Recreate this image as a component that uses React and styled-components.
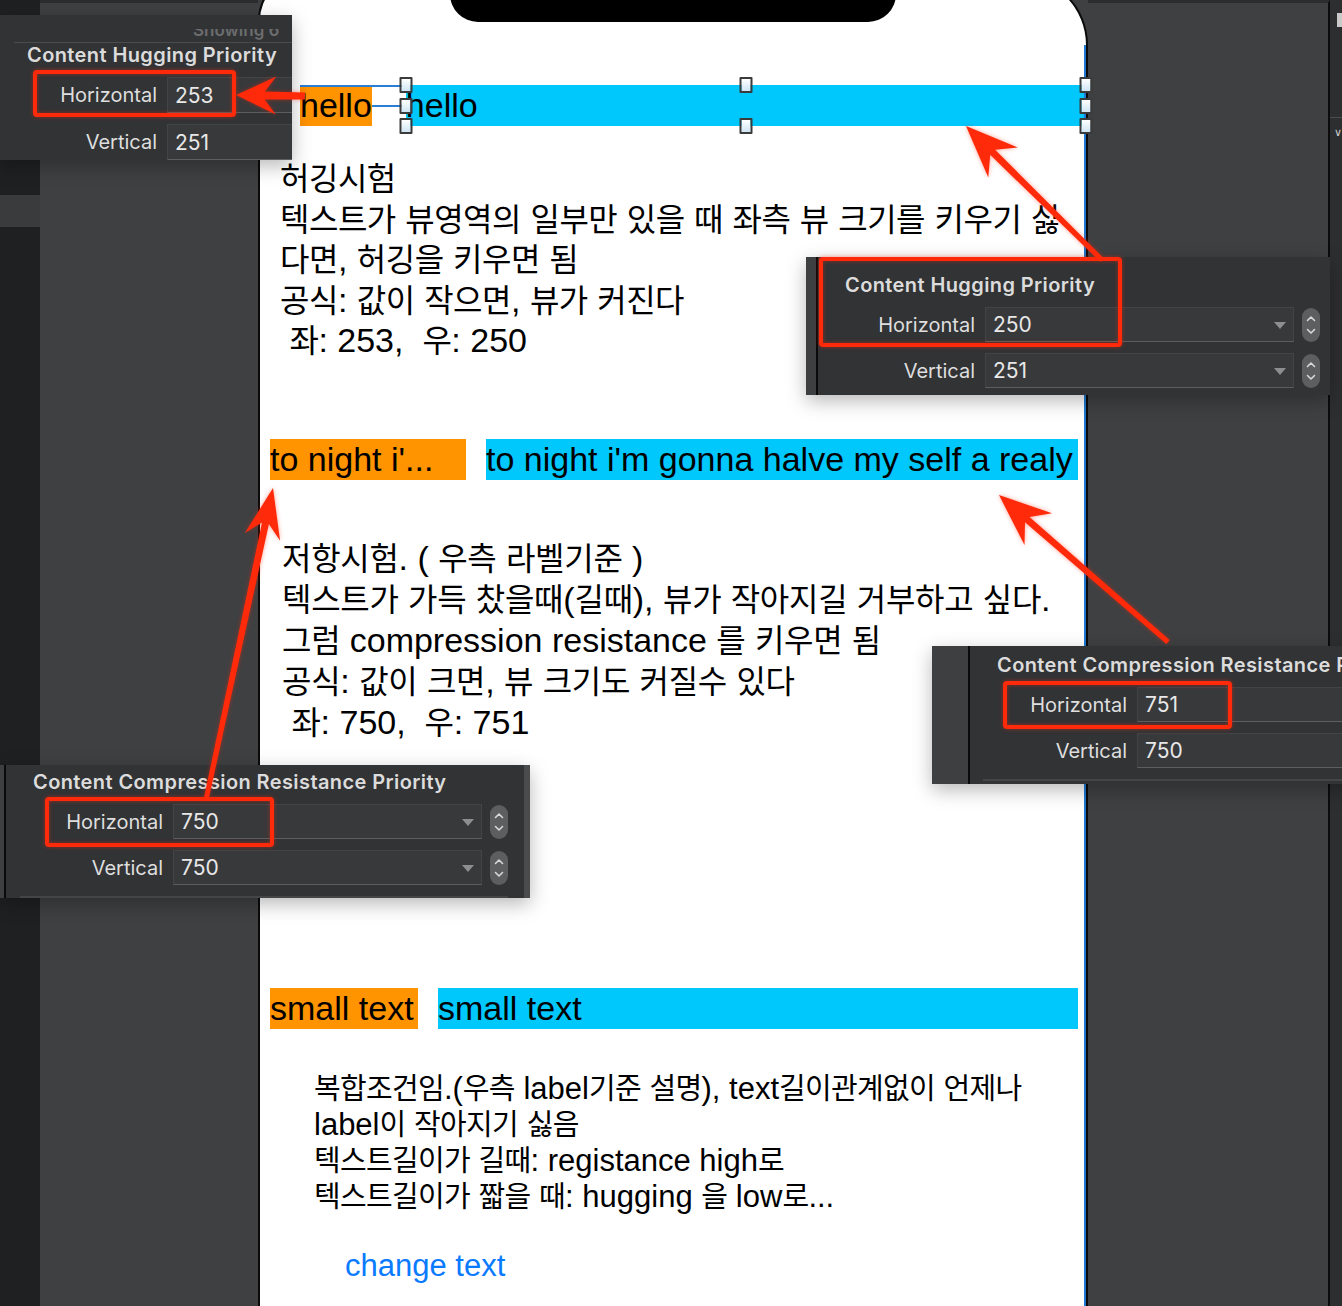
import React from "react";
import styled, { createGlobalStyle } from "styled-components";

const GlobalStyle = createGlobalStyle`
  html, body {
    margin: 0;
    padding: 0;
    background: #3f4042;
  }
  #root {
    width: 1342px;
    height: 1306px;
  }
`;

const Page = styled.div`
  position: relative;
  width: 1342px;
  height: 1306px;
  overflow: hidden;
  display: flex;
  background: #3f4042;
`;

const Sidebar = styled.div`
  width: 40px;
  flex-shrink: 0;
  background: #1f2022;
  padding-top: 195px;
  box-sizing: border-box;
`;

const SideTab = styled.div`
  height: 32px;
  background: #3a3b3d;
`;

const Gutter = styled.div`
  flex: ${(p) => (p.$grow ? "1" : "none")};
  width: ${(p) => (p.$w ? p.$w + "px" : "auto")};
  border-top: 3px solid #2c2d2f;
  border-right: ${(p) => (p.$edge ? "2px solid #0c0c0c" : "none")};
`;

const Edge = styled.div`
  width: 12px;
  flex-shrink: 0;
  background: #2d2e30;
  display: flex;
  flex-direction: column;
  padding-top: 13px;
  box-sizing: border-box;
`;

const EdgeMark = styled.div`
  width: 5px;
  height: 14px;
  margin-left: 7px;
  background: #c9c9c9;
`;

const EdgeRule = styled.div`
  height: 1px;
  margin-top: 90px;
  background: #4c4d4f;
`;

const EdgeGlyph = styled.div`
  margin: 8px 0 0 4px;
  color: #cfcfcf;
  font: 11px "DejaVu Sans", sans-serif;
`;

/* ---------- phone ---------- */

const Phone = styled.div`
  position: relative;
  width: 830px;
  flex-shrink: 0;
  margin-top: -25px;
  height: calc(100% + 25px);
  box-sizing: border-box;
  background: #fff;
  border: 2px solid #0b0b0b;
  border-bottom: none;
  border-radius: 45px 70px 0 0;
  display: flex;
  flex-direction: column;
  font-family: "Liberation Sans", "Noto Sans CJK KR", sans-serif;
  color: #000;

  &::after {
    content: "";
    position: absolute;
    right: 0;
    top: 68px;
    bottom: 0;
    width: 2px;
    background: #1f78d1;
  }
`;

const Notch = styled.div`
  width: 446px;
  height: 45px;
  flex-shrink: 0;
  margin: 0 auto;
  background: #000;
  border-radius: 0 0 28px 28px;
`;

const HelloRow = styled.div`
  position: relative;
  display: flex;
  height: 41px;
  margin-top: 63px;
  padding-left: 40px;

  &::before {
    content: "";
    position: absolute;
    top: 0;
    left: 40px;
    right: 0;
    height: 2px;
    background: #2a7fd4;
  }
`;

const LabelRow = styled.div`
  display: flex;
  gap: 20px;
  height: 41px;
  margin-top: ${(p) => p.$top}px;
  padding: 0 8px 0 10px;
`;

const OrangeLabel = styled.div`
  width: ${(p) => (p.$w ? p.$w + "px" : "auto")};
  flex-shrink: 0;
  background: #ff9300;
  font-size: 34px;
  line-height: 41px;
  white-space: nowrap;
  overflow: hidden;
`;

const BlueLabel = styled.div`
  position: relative;
  flex: 1;
  background: #00c7fc;
  font-size: 34px;
  line-height: 41px;
  white-space: nowrap;
`;

const Constraint = styled.div`
  width: 34px;
  flex-shrink: 0;
  align-self: center;
  height: 2px;
  background: #2a7fd4;
`;

const Handle = styled.div`
  position: absolute;
  left: ${(p) => p.$x}%;
  top: ${(p) => p.$y}%;
  width: 9px;
  height: 12px;
  transform: translate(-50%, -50%);
  background: linear-gradient(#ffffff, #cfe5f4);
  border: 2px solid #3b3b3b;
  border-radius: 1px;
  z-index: 2;
`;

const TextBlock = styled.div`
  margin-top: ${(p) => p.$top}px;
  padding-left: ${(p) => p.$left}px;
  font-size: ${(p) => p.$size}px;
  line-height: ${(p) => p.$lh}px;
`;

const Line = styled.div`
  white-space: pre;
  height: ${(p) => p.$lh}px;
`;

const Hangul = styled.span`
  display: inline-block;
  font-family: "Noto Sans CJK KR", sans-serif;
  font-size: ${(p) => p.$size}px;
  letter-spacing: ${(p) => p.$ls}px;
  line-height: 1;
`;

const ChangeText = styled.div`
  margin-top: 33px;
  padding-left: 85px;
  font-size: 31px;
  line-height: 36px;
  color: #0a7aff;
`;

/* ---------- inspector callouts ---------- */

const Panel = styled.div`
  position: absolute;
  left: ${(p) => p.$left}px;
  top: ${(p) => p.$top}px;
  width: ${(p) => p.$w}px;
  height: ${(p) => p.$h}px;
  display: flex;
  overflow: hidden;
  background: #323335;
  box-shadow: 0 6px 18px rgba(0, 0, 0, 0.28);
  font-family: Inter, "Liberation Sans", sans-serif;
  z-index: 5;
`;

const Strip = styled.div`
  width: ${(p) => p.$w}px;
  flex-shrink: 0;
  background: #3e3f41;
  border-right: 2px solid #0a0a0a;
`;

const RightStrip = styled.div`
  width: 6px;
  flex-shrink: 0;
  background: #4a4b4d;
`;

const Body = styled.div`
  flex: 1;
  min-width: 0;
  padding-top: ${(p) => p.$pad}px;
`;

const Header = styled.div`
  height: 13px;
  margin-left: 14px;
  padding-left: 179px;
  border-bottom: 1px solid #4b4c4e;
  overflow: hidden;
`;

const HeaderText = styled.div`
  margin-top: -9px;
  font-size: 17px;
  font-weight: 600;
  line-height: 20px;
  color: #6b6c6e;
  white-space: nowrap;
`;

const Title = styled.div`
  padding-left: 27px;
  height: 24px;
  margin-bottom: 10px;
  font-size: 20px;
  font-weight: 600;
  letter-spacing: 0.4px;
  line-height: 24px;
  color: #dcdcdc;
  white-space: nowrap;
`;

const Row = styled.div`
  display: flex;
  align-items: center;
  height: ${(p) => p.$h}px;

  & + & {
    margin-top: 11px;
  }
`;

const RowLabel = styled.div`
  width: 157px;
  flex-shrink: 0;
  text-align: right;
  font-size: 20px;
  color: #dedede;
`;

const Field = styled.div`
  position: relative;
  width: 309px;
  height: 100%;
  flex-shrink: 0;
  margin-left: 10px;
  box-sizing: border-box;
  display: flex;
  align-items: center;
  padding-left: 7px;
  background: #38393b;
  border: 1px solid #434446;
  border-bottom-color: #5d5e60;
  font-size: 21px;
  color: #e8e8e8;
`;

const Caret = styled.span`
  position: absolute;
  right: 7px;
  top: 50%;
  margin-top: -3px;
  border-left: 6px solid transparent;
  border-right: 6px solid transparent;
  border-top: 7px solid #8e8e90;
`;

const StepperBox = styled.div`
  width: 18px;
  height: 34px;
  flex-shrink: 0;
  margin-left: 8px;
  border-radius: 9px;
  background: #5d5e60;
  display: flex;
`;

const Divider = styled.div`
  height: 2px;
  margin: 11px ${(p) => p.$right}px 0 ${(p) => p.$inset}px;
  background: #444547;
`;

const Annotations = styled.svg`
  position: absolute;
  left: 0;
  top: 0;
  pointer-events: none;
  z-index: 10;
  filter: drop-shadow(0 0 2px rgba(255, 40, 10, 0.45));
`;

/* ---------- helpers ---------- */

const HANGUL = /([\uAC00-\uD7A3]+)/;

function mixed(text, size, ls) {
  return text.split(HANGUL).map((part, i) =>
    HANGUL.test(part) ? (
      <Hangul key={i} $size={size} $ls={ls}>
        {part}
      </Hangul>
    ) : (
      part
    )
  );
}

function arrowPoints([x1, y1], [x2, y2], head, wing, tail, neck) {
  const len = Math.hypot(x2 - x1, y2 - y1);
  const ux = (x2 - x1) / len;
  const uy = (y2 - y1) / len;
  const nx = -uy;
  const ny = ux;
  const bx = x2 - ux * head;
  const by = y2 - uy * head;
  const kx = x2 - ux * head * 0.72;
  const ky = y2 - uy * head * 0.72;
  const pts = [
    [x1 + nx * tail, y1 + ny * tail],
    [kx + nx * neck, ky + ny * neck],
    [bx + nx * wing, by + ny * wing],
    [x2, y2],
    [bx - nx * wing, by - ny * wing],
    [kx - nx * neck, ky - ny * neck],
    [x1 - nx * tail, y1 - ny * tail],
  ];
  return pts.map((p) => p.map((n) => n.toFixed(1)).join(",")).join(" ");
}

const arrows = [
  { from: [305, 96], to: [236, 95], head: 40, wing: 19, tail: 3.5, neck: 4 },
  { from: [1102, 260], to: [966, 126], head: 52, wing: 21, tail: 2.5, neck: 3.5 },
  { from: [1168, 642], to: [999, 495], head: 52, wing: 21, tail: 2.5, neck: 3.5 },
  { from: [206, 800], to: [273, 488], head: 50, wing: 18, tail: 2.5, neck: 3.5 },
];

const boxes = [
  { x: 35, y: 72, w: 199, h: 43 },
  { x: 821, y: 259, w: 299, h: 86 },
  { x: 1005, y: 683, w: 225, h: 44 },
  { x: 47, y: 799, w: 225, h: 46 },
];

const handles = [
  [0, 0], [50, 0], [100, 0],
  [0, 50], [100, 50],
  [0, 100], [50, 100], [100, 100],
];

const block1 = [
  "허깅시험",
  "텍스트가 뷰영역의 일부만 있을 때 좌측 뷰 크기를 키우기 싫",
  "다면, 허깅을 키우면 됨",
  "공식: 값이 작으면, 뷰가 커진다",
  " 좌: 253,  우: 250",
];

const block2 = [
  "저항시험. ( 우측 라벨기준 )",
  "텍스트가 가득 찼을때(길때), 뷰가 작아지길 거부하고 싶다.",
  "그럼 compression resistance 를 키우면 됨",
  "공식: 값이 크면, 뷰 크기도 커질수 있다",
  " 좌: 750,  우: 751",
];

const block3 = [
  "복합조건임.(우측 label기준 설명), text길이관계없이 언제나",
  "label이 작아지기 싫음",
  "텍스트길이가 길때: registance high로",
  "텍스트길이가 짧을 때: hugging 을 low로...",
];

function Stepper() {
  return (
    <StepperBox>
      <svg width="18" height="34" viewBox="0 0 18 34">
        <path d="M5.5 12.5 L9 9 L12.5 12.5" fill="none" stroke="#d8d8d8" strokeWidth="1.6" strokeLinecap="round" strokeLinejoin="round" />
        <path d="M5.5 21.5 L9 25 L12.5 21.5" fill="none" stroke="#d8d8d8" strokeWidth="1.6" strokeLinecap="round" strokeLinejoin="round" />
      </svg>
    </StepperBox>
  );
}

function Inspector({ left, top, width, height, strip, rightStrip, pad, rowH = 35, title, h, v, header, divider }) {
  return (
    <Panel $left={left} $top={top} $w={width} $h={height}>
      {strip ? <Strip $w={strip} /> : null}
      <Body $pad={pad}>
        {header && (
          <Header>
            <HeaderText>Showing 6</HeaderText>
          </Header>
        )}
        <Title>{title}</Title>
        <Row $h={rowH}>
          <RowLabel>Horizontal</RowLabel>
          <Field>
            {h}
            <Caret />
          </Field>
          <Stepper />
        </Row>
        <Row $h={rowH}>
          <RowLabel>Vertical</RowLabel>
          <Field>
            {v}
            <Caret />
          </Field>
          <Stepper />
        </Row>
        {divider && <Divider $inset={divider[0]} $right={divider[1]} />}
      </Body>
      {rightStrip && <RightStrip />}
    </Panel>
  );
}

function Paragraph({ lines, top, left, size, lh, koSize, koLs }) {
  return (
    <TextBlock $top={top} $left={left} $size={size} $lh={lh}>
      {lines.map((l) => (
        <Line key={l} $lh={lh}>
          {mixed(l, koSize, koLs)}
        </Line>
      ))}
    </TextBlock>
  );
}

export default function App() {
  return (
    <Page>
      <GlobalStyle />
      <Sidebar>
        <SideTab />
      </Sidebar>
      <Gutter $w={218} />
      <Phone>
        <Notch />
        <HelloRow>
          <OrangeLabel>hello</OrangeLabel>
          <Constraint />
          <BlueLabel>
            hello
            {handles.map(([x, y]) => (
              <Handle key={x + "-" + y} $x={x} $y={y} />
            ))}
          </BlueLabel>
        </HelloRow>

        <Paragraph lines={block1} top={32} left={20} size={34} lh={40.6} koSize={32} koLs={-0.5} />

        <LabelRow $top={78}>
          <OrangeLabel $w={196}>to night i'...</OrangeLabel>
          <BlueLabel>to night i'm gonna halve my self a realy</BlueLabel>
        </LabelRow>

        <Paragraph lines={block2} top={58} left={22} size={34} lh={41} koSize={32} koLs={-0.3} />

        <LabelRow $top={245}>
          <OrangeLabel $w={148}>small text</OrangeLabel>
          <BlueLabel>small text</BlueLabel>
        </LabelRow>

        <Paragraph lines={block3} top={42} left={54} size={31} lh={36} koSize={29} koLs={-0.7} />

        <ChangeText>change text</ChangeText>
      </Phone>
      <Gutter $grow $edge />
      <Edge>
        <EdgeMark />
        <EdgeRule />
        <EdgeGlyph>∨</EdgeGlyph>
      </Edge>

      <Inspector left={0} top={15} width={292} height={145} pad={14} rowH={36} header title="Content Hugging Priority" h="253" v="251" />
      <Inspector left={806} top={257} width={524} height={138} strip={10} pad={16} title="Content Hugging Priority" h="250" v="251" />
      <Inspector left={932} top={646} width={420} height={138} strip={36} pad={7} title="Content Compression Resistance Priority" h="751" v="750" divider={[13, -200]} />
      <Inspector left={0} top={765} width={530} height={133} strip={4} rightStrip pad={5} title="Content Compression Resistance Priority" h="750" v="750" divider={[14, 16]} />

      <Annotations width="1342" height="1306" viewBox="0 0 1342 1306">
        {boxes.map((b) => (
          <rect key={b.x} x={b.x} y={b.y} width={b.w} height={b.h} rx="2" fill="none" stroke="#ff2a0a" strokeWidth="4" />
        ))}
        {arrows.map((a) => (
          <polygon key={a.to.join()} points={arrowPoints(a.from, a.to, a.head, a.wing, a.tail, a.neck)} fill="#ff2a0a" />
        ))}
      </Annotations>
    </Page>
  );
}
